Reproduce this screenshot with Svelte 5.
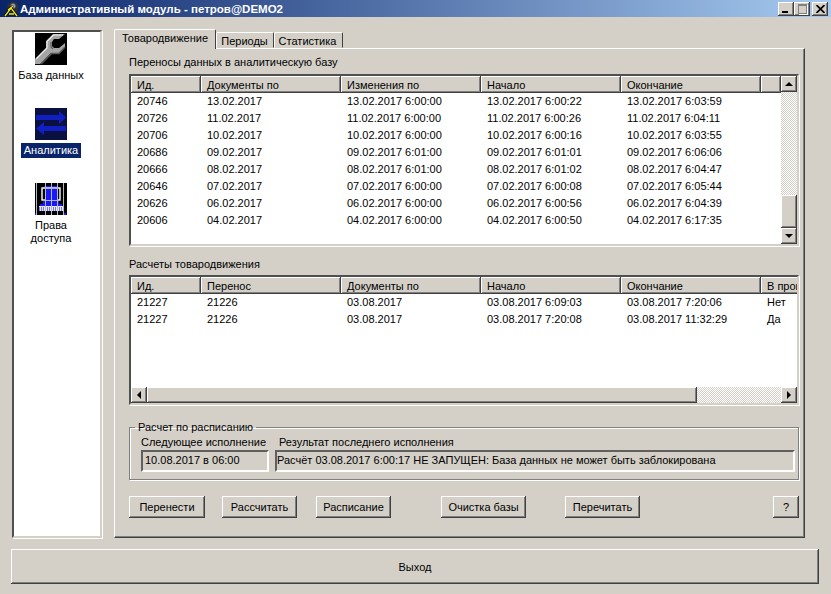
<script>
	const transfers = [
		['20746', '13.02.2017', '13.02.2017 6:00:00', '13.02.2017 6:00:22', '13.02.2017 6:03:59'],
		['20726', '11.02.2017', '11.02.2017 6:00:00', '11.02.2017 6:00:26', '11.02.2017 6:04:11'],
		['20706', '10.02.2017', '10.02.2017 6:00:00', '10.02.2017 6:00:16', '10.02.2017 6:03:55'],
		['20686', '09.02.2017', '09.02.2017 6:01:00', '09.02.2017 6:01:01', '09.02.2017 6:06:06'],
		['20666', '08.02.2017', '08.02.2017 6:01:00', '08.02.2017 6:01:02', '08.02.2017 6:04:47'],
		['20646', '07.02.2017', '07.02.2017 6:00:00', '07.02.2017 6:00:08', '07.02.2017 6:05:44'],
		['20626', '06.02.2017', '06.02.2017 6:00:00', '06.02.2017 6:00:56', '06.02.2017 6:04:39'],
		['20606', '04.02.2017', '04.02.2017 6:00:00', '04.02.2017 6:00:50', '04.02.2017 6:17:35']
	];
	const calcs = [
		['21227', '21226', '03.08.2017', '03.08.2017 6:09:03', '03.08.2017 7:20:06', 'Нет'],
		['21227', '21226', '03.08.2017', '03.08.2017 7:20:08', '03.08.2017 11:32:29', 'Да']
	];
	const headTop = ['Ид.', 'Документы по', 'Изменения по', 'Начало', 'Окончание'];
	const headBottom = ['Ид.', 'Перенос', 'Документы по', 'Начало', 'Окончание', 'В прои'];
</script>

<div class="window">
	<div class="titlebar">
		<svg class="appicon" width="16" height="16" viewBox="0 0 16 16">
			<circle cx="10" cy="6" r="5.5" fill="#30303c" />
			<circle cx="10" cy="5" r="2.5" fill="#9098a8" />
			<path d="M2 15 L8 7 L14 15 M6 13 H11 M5 9 L10 5" fill="none" stroke="#000" stroke-width="2.6" />
			<path d="M2 15 L8 7 L14 15 M6 13 H11 M5 9 L10 5" fill="none" stroke="#f6ea18" stroke-width="1.3" />
		</svg>
		<span class="title">Административный модуль - петров@DEMO2</span>
		<div class="winbtns">
			<button class="wb" aria-label="Свернуть"><i class="min"></i></button>
			<button class="wb off" aria-label="Развернуть"><i class="max"></i></button>
			<button class="wb close" aria-label="Закрыть">
				<svg width="9" height="8" viewBox="0 0 9 8"><path d="M0.5 0 L8.5 8 M8.5 0 L0.5 8" stroke="#000" stroke-width="1.7" /></svg>
			</button>
		</div>
	</div>

	<div class="main">
		<nav class="side">
			<div class="navitem first">
				<svg class="navicon" width="32" height="32" viewBox="0 0 32 32">
					<rect width="32" height="32" fill="#000" />
					<path d="M11 8 L18 1 H30 L24 6 H19 L17 9 V13 L19 15 H24 L30 10 V14 L24 20 H16 L5 31 H0 V26 L11 15 Z" fill="#a4a4a4" />
					<path d="M1 26 L12 15 V8.5 L18.500 2 H28" fill="none" stroke="#efefef" stroke-width="1.2" />
					<path d="M6 31 L16.500 20.500 H24 L30 14" fill="none" stroke="#5a5a5a" stroke-width="1.6" />
					<path d="M16 9 V14 L18 16" fill="none" stroke="#606060" stroke-width="1.2" />
				</svg>
				<span class="navlabel">База данных</span>
			</div>
			<div class="navitem second">
				<svg class="navicon" width="32" height="32" viewBox="0 0 32 32">
					<rect width="32" height="32" fill="#0a1040" />
					<path d="M1 7 H24 V3 L31 9.500 L24 16 V12 H1 Z" fill="#1020c0" />
					<path d="M31 18 H9 V14 L1 20.500 L9 27 V23 H31 Z" fill="#1020c0" />
				</svg>
				<span class="navlabel selected">Аналитика</span>
			</div>
			<div class="navitem third">
				<svg class="navicon" width="32" height="32" viewBox="0 0 32 32">
					<rect width="32" height="32" fill="#000" />
					<rect x="9" y="3" width="14" height="2" fill="#1818ff" />
					<rect x="7" y="5" width="18" height="12" fill="none" stroke="#fff" stroke-width="1.4" />
					<rect x="10" y="6" width="12" height="11" fill="#1818ff" />
					<rect x="8" y="18" width="16" height="3" fill="#1818ff" />
					<rect x="5" y="21" width="22" height="2" fill="#1818ff" />
					<rect x="4" y="23" width="24" height="5" fill="#e4e4ff" />
					<path d="M4 25 H28 M4 27 H28" stroke="#1010a0" stroke-dasharray="1 1" />
					<rect x="0" y="30" width="2" height="2" fill="#1818ff" />
					<rect x="29" y="30" width="2" height="2" fill="#1818ff" />
					<path d="M1.500 0 V32 M10.500 0 V32 M16.500 0 V32 M22.500 0 V32 M28.500 0 V32" stroke="#b8b8b8" stroke-width="1" />
				</svg>
				<span class="navlabel">Права<br />доступа</span>
			</div>
		</nav>

		<div class="tabs">
			<div class="tabstrip">
				<div class="tab active">Товародвижение</div>
				<div class="tab per">Периоды</div>
				<div class="tab stat">Статистика</div>
			</div>
			<div class="panel">
				<div class="caption cap1">Переносы данных в аналитическую базу</div>
				<div class="list top">
					<div class="listbody">
						<div class="row head">
							{#each headTop as h}<div class="hc">{h}</div>{/each}
							<div class="hc fill"></div>
						</div>
						{#each transfers as r}
							<div class="row">{#each r as c}<div class="cell">{c}</div>{/each}</div>
						{/each}
					</div>
					<div class="vbar">
						<button class="sb" aria-label="Вверх"><i class="tri up"></i></button>
						<div class="track"></div>
						<div class="thumb"></div>
						<button class="sb" aria-label="Вниз"><i class="tri down"></i></button>
					</div>
				</div>

				<div class="caption cap2">Расчеты товародвижения</div>
				<div class="list bottom">
					<div class="listbody">
						<div class="row head">
							{#each headBottom as h}<div class="hc">{h}</div>{/each}
						</div>
						{#each calcs as r}
							<div class="row">{#each r as c}<div class="cell">{c}</div>{/each}</div>
						{/each}
					</div>
					<div class="hbar">
						<button class="sb" aria-label="Влево"><i class="tri left"></i></button>
						<div class="thumb"></div>
						<div class="track"></div>
						<button class="sb" aria-label="Вправо"><i class="tri right"></i></button>
					</div>
				</div>

				<fieldset class="group">
					<legend>Расчет по расписанию</legend>
					<div class="fields">
						<div class="fcol next">
							<div class="flabel">Следующее исполнение</div>
							<div class="field">10.08.2017 в 06:00</div>
						</div>
						<div class="fcol result">
							<div class="flabel">Результат последнего исполнения</div>
							<div class="field">Расчёт 03.08.2017 6:00:17 НЕ ЗАПУЩЕН: База данных не может быть заблокирована</div>
						</div>
					</div>
				</fieldset>

				<div class="actions">
					<button class="btn b1">Перенести</button>
					<button class="btn b2">Рассчитать</button>
					<button class="btn b3">Расписание</button>
					<button class="btn b4">Очистка базы</button>
					<button class="btn b5">Перечитать</button>
					<button class="btn b6">?</button>
				</div>
			</div>
		</div>
	</div>

	<button class="exit">Выход</button>
</div>

<style>
	:global(body) {
		margin: 0;
		background: #d4d0c8;
	}
	.window {
		width: 831px;
		height: 594px;
		overflow: hidden;
		background: #d4d0c8;
		font: 11px "Liberation Sans", Arial, sans-serif;
		color: #000;
		display: flex;
		flex-direction: column;
	}
	button {
		font: inherit;
		color: inherit;
		padding: 0;
		border: 0;
		background: #d4d0c8;
	}

	.titlebar {
		height: 17px;
		display: flex;
		align-items: center;
		background: linear-gradient(90deg, #0a246a, #a6caf0);
		padding-left: 3px;
		padding-right: 3px;
	}
	.appicon {
		flex: none;
	}
	.title {
		margin-left: 1px;
		color: #fff;
		font-weight: bold;
		font-size: 11.5px;
		white-space: nowrap;
	}
	.winbtns {
		margin-left: auto;
		display: flex;
	}
	.wb {
		width: 16px;
		height: 14px;
		box-shadow: inset -1px -1px #404040, inset 1px 1px #fff, inset -2px -2px #808080;
		display: flex;
		align-items: center;
		justify-content: center;
	}
	.wb.close {
		margin-left: 2px;
	}
	.min {
		width: 6px;
		height: 2px;
		background: #000;
		margin-top: 6px;
		margin-right: 2px;
	}
	.max {
		width: 7px;
		height: 7px;
		border: 1px solid #808080;
		border-top-width: 2px;
		box-shadow: 1px 1px #fff;
	}

	.main {
		flex: none;
		height: 520px;
		display: flex;
		padding: 13px 27px 0 12px;
		box-sizing: border-box;
	}
	.side {
		flex: none;
		width: 90px;
		height: 508px;
		box-sizing: border-box;
		background: #fff;
		border: 2px solid;
		border-color: #505050 #d4d0c8 #d4d0c8 #505050;
		box-shadow: 1px 1px #fff;
		padding-right: 12px;
		display: flex;
		flex-direction: column;
		align-items: center;
	}
	.navitem {
		display: flex;
		flex-direction: column;
		align-items: center;
		text-align: center;
		line-height: 13px;
	}
	.navitem.first {
		margin-top: 1px;
	}
	.navitem.second,
	.navitem.third {
		margin-top: 26px;
	}
	.navicon {
		display: block;
	}
	.navlabel {
		margin-top: 4px;
		white-space: nowrap;
	}
	.navlabel.selected {
		background: #0a246a;
		color: #fff;
		padding: 1px 3px;
		margin-top: 3px;
		margin-bottom: -1px;
	}

	.tabs {
		flex: none;
		margin-left: 12px;
		width: 691px;
	}
	.tabstrip {
		display: flex;
		height: 18px;
		align-items: flex-end;
		position: relative;
		z-index: 1;
	}
	.tab {
		height: 16px;
		line-height: 16px;
		text-align: center;
		box-sizing: border-box;
		border: 1px solid;
		border-color: #fff #404040 transparent #fff;
		border-radius: 2px 2px 0 0;
		background: #d4d0c8;
	}
	.tab.active {
		width: 102px;
		height: 20px;
		margin-bottom: -1px;
		line-height: 17px;
		border-bottom: 0;
	}
	.tab.per {
		width: 58px;
		padding-right: 1px;
	}
	.tab.stat {
		width: 69px;
		padding-right: 2px;
	}
	.panel {
		height: 490px;
		box-sizing: border-box;
		border: 1px solid;
		border-color: #fff #404040 #404040 #fff;
		box-shadow: inset -1px -1px #808080;
		padding: 0 4px 0 14px;
		display: flex;
		flex-direction: column;
	}
	.caption {
		line-height: 14px;
	}
	.cap1 {
		margin-top: 6px;
	}
	.cap2 {
		margin-top: 11px;
	}
	.list {
		width: 670px;
		box-sizing: border-box;
		border: 2px solid;
		border-color: #505050 #d4d0c8 #d4d0c8 #505050;
		box-shadow: 1px 1px #fff;
		background: #fff;
		overflow: hidden;
	}
	.list.top {
		margin-top: 5px;
		height: 172px;
		display: flex;
	}
	.list.bottom {
		margin-top: 4px;
		height: 130px;
		display: flex;
		flex-direction: column;
	}
	.listbody {
		flex: 1;
		min-width: 0;
		overflow: hidden;
	}
	.row {
		display: grid;
		grid-template-columns: 70px 140px 140px 140px 140px 60px;
		height: 17px;
		white-space: nowrap;
	}
	.top .row {
		grid-template-columns: 70px 140px 140px 140px 140px 1fr;
	}
	.hc {
		background: #d4d0c8;
		box-sizing: border-box;
		padding-left: 6px;
		line-height: 19px;
		height: 17px;
		box-shadow: inset -1px -1px #404040, inset 1px 1px #fff, inset -2px -2px #808080;
		overflow: hidden;
	}
	.cell {
		padding-left: 6px;
		line-height: 17px;
		overflow: hidden;
	}
	.vbar {
		flex: none;
		width: 16px;
		display: flex;
		flex-direction: column;
	}
	.hbar {
		flex: none;
		height: 16px;
		display: flex;
	}
	.sb {
		flex: none;
		width: 16px;
		height: 16px;
		display: flex;
		align-items: center;
		justify-content: center;
		box-shadow: inset -1px -1px #404040, inset 1px 1px #fff, inset -2px -2px #808080;
	}
	.track {
		flex: 1;
		background-image: conic-gradient(#d4d0c8 25%, #fff 0 50%, #d4d0c8 0 75%, #fff 0);
		background-size: 2px 2px;
	}
	.thumb {
		flex: none;
		background: #d4d0c8;
		box-shadow: inset -1px -1px #404040, inset 1px 1px #fff, inset -2px -2px #808080;
	}
	.vbar .thumb {
		height: 33px;
	}
	.hbar .thumb {
		width: 550px;
	}
	.tri {
		width: 0;
		height: 0;
		border: 4px solid transparent;
	}
	.tri.up {
		border-bottom-color: #000;
		border-top-width: 0;
	}
	.tri.down {
		border-top-color: #000;
		border-bottom-width: 0;
	}
	.tri.left {
		border-right-color: #000;
		border-left-width: 0;
	}
	.tri.right {
		border-left-color: #000;
		border-right-width: 0;
	}

	.group {
		margin: 16px 0 0;
		padding: 0 3px 0 11px;
		width: 670px;
		height: 59px;
		box-sizing: border-box;
		border: 1px solid #808080;
		box-shadow: 1px 1px #fff, inset 1px 1px #fff;
	}
	legend {
		padding: 0 3px;
		margin-left: -6px;
		line-height: 13px;
	}
	.fields {
		display: flex;
		gap: 6px;
		margin-top: 1px;
	}
	.flabel {
		line-height: 14px;
		margin-bottom: 1px;
		white-space: nowrap;
	}
	.fcol.next {
		width: 128px;
		flex: none;
	}
	.fcol.result {
		flex: 1;
	}
	.fcol.result .flabel {
		padding-left: 4px;
	}
	.field {
		height: 22px;
		box-sizing: border-box;
		line-height: 17px;
		padding-left: 1px;
		border: 2px solid;
		border-color: #606060 #fff #fff #606060;
		white-space: nowrap;
		overflow: hidden;
	}
	.fcol.next .field {
		padding-left: 2px;
	}
	.fcol.result .field {
		padding-left: 0;
	}

	.actions {
		display: flex;
		margin-top: 16px;
	}
	.btn {
		height: 22px;
		box-shadow: inset -1px -1px #404040, inset 1px 1px #fff, inset -2px -2px #808080;
	}
	.b1 { width: 76px; }
	.b2 { width: 75px; margin-left: 17px; }
	.b3 { width: 75px; margin-left: 19px; }
	.b4 { width: 85px; margin-left: 50px; }
	.b5 { width: 75px; margin-left: 39px; }
	.b6 { width: 26px; margin-left: 133px; }

	.exit {
		flex: none;
		margin: 12px 0 0 11px;
		width: 808px;
		height: 35px;
		box-shadow: inset -1px -1px #404040, inset 1px 1px #fff, inset -2px -2px #808080;
	}
</style>
